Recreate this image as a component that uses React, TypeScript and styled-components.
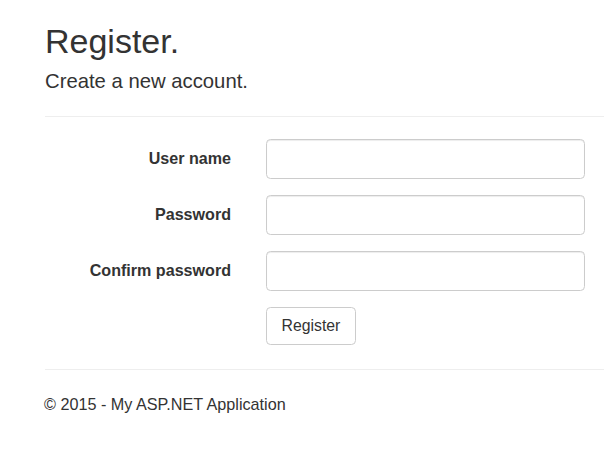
import React from 'react'
import styled, { createGlobalStyle } from 'styled-components'

const GlobalStyle = createGlobalStyle`
  html, body {
    margin: 0;
    padding: 0;
    background: #fff;
  }
  body {
    font-family: 'Liberation Sans', Arial, sans-serif;
    font-size: 15.8px;
    color: #333;
    overflow: hidden;
  }
`

const Page = styled.div`
  padding-left: 45px;
  padding-top: 0.1px;
`

const Title = styled.h2`
  font-size: 34px;
  font-weight: 400;
  line-height: 1.1;
  margin: 22.5px 0 10px;
`

const Subtitle = styled.h4`
  font-size: 20.3px;
  font-weight: 400;
  line-height: 1.1;
  margin: 0;
`

const Rule = styled.hr<{ $top: number; $bottom: number }>`
  border: 0;
  border-top: 1px solid #eee;
  margin: ${(p) => p.$top}px 0 ${(p) => p.$bottom}px;
`

const Form = styled.form`
  display: flex;
  flex-direction: column;
  gap: 16px;
`

const Row = styled.div`
  display: grid;
  grid-template-columns: 186px 319px;
  column-gap: 35px;
  align-items: center;
`

const Label = styled.label`
  font-size: 16.1px;
  font-weight: 700;
  text-align: right;
`

const Input = styled.input`
  box-sizing: border-box;
  height: 40px;
  width: 100%;
  border: 1px solid #ccc;
  border-radius: 4.5px;
  background: #fff;
  box-shadow: inset 0 1px 1px rgba(0, 0, 0, 0.075);
  padding: 0 13px;
  font: inherit;
`

const Button = styled.button`
  grid-column: 2;
  justify-self: start;
  box-sizing: border-box;
  height: 38px;
  padding: 0 14.5px;
  background: #fff;
  border: 1px solid #ccc;
  border-radius: 4.5px;
  color: #333;
  font: inherit;
  cursor: pointer;
`

const Footer = styled.footer`
  font-size: 16.2px;
  line-height: 1.43;
  margin-left: -1px;
`

const fields = [
  { id: 'user', label: 'User name', type: 'text' },
  { id: 'pass', label: 'Password', type: 'password' },
  { id: 'confirm', label: 'Confirm password', type: 'password' },
]

export default function App() {
  return (
    <Page>
      <GlobalStyle />
      <Title>Register.</Title>
      <Subtitle>Create a new account.</Subtitle>
      <Rule $top={23.5} $bottom={22} />
      <Form onSubmit={(e) => e.preventDefault()}>
        {fields.map((f) => (
          <Row key={f.id}>
            <Label htmlFor={f.id}>{f.label}</Label>
            <Input id={f.id} type={f.type} />
          </Row>
        ))}
        <Row>
          <Button type="submit">Register</Button>
        </Row>
      </Form>
      <Rule $top={24} $bottom={23} />
      <Footer>© 2015 - My ASP.NET Application</Footer>
    </Page>
  )
}
